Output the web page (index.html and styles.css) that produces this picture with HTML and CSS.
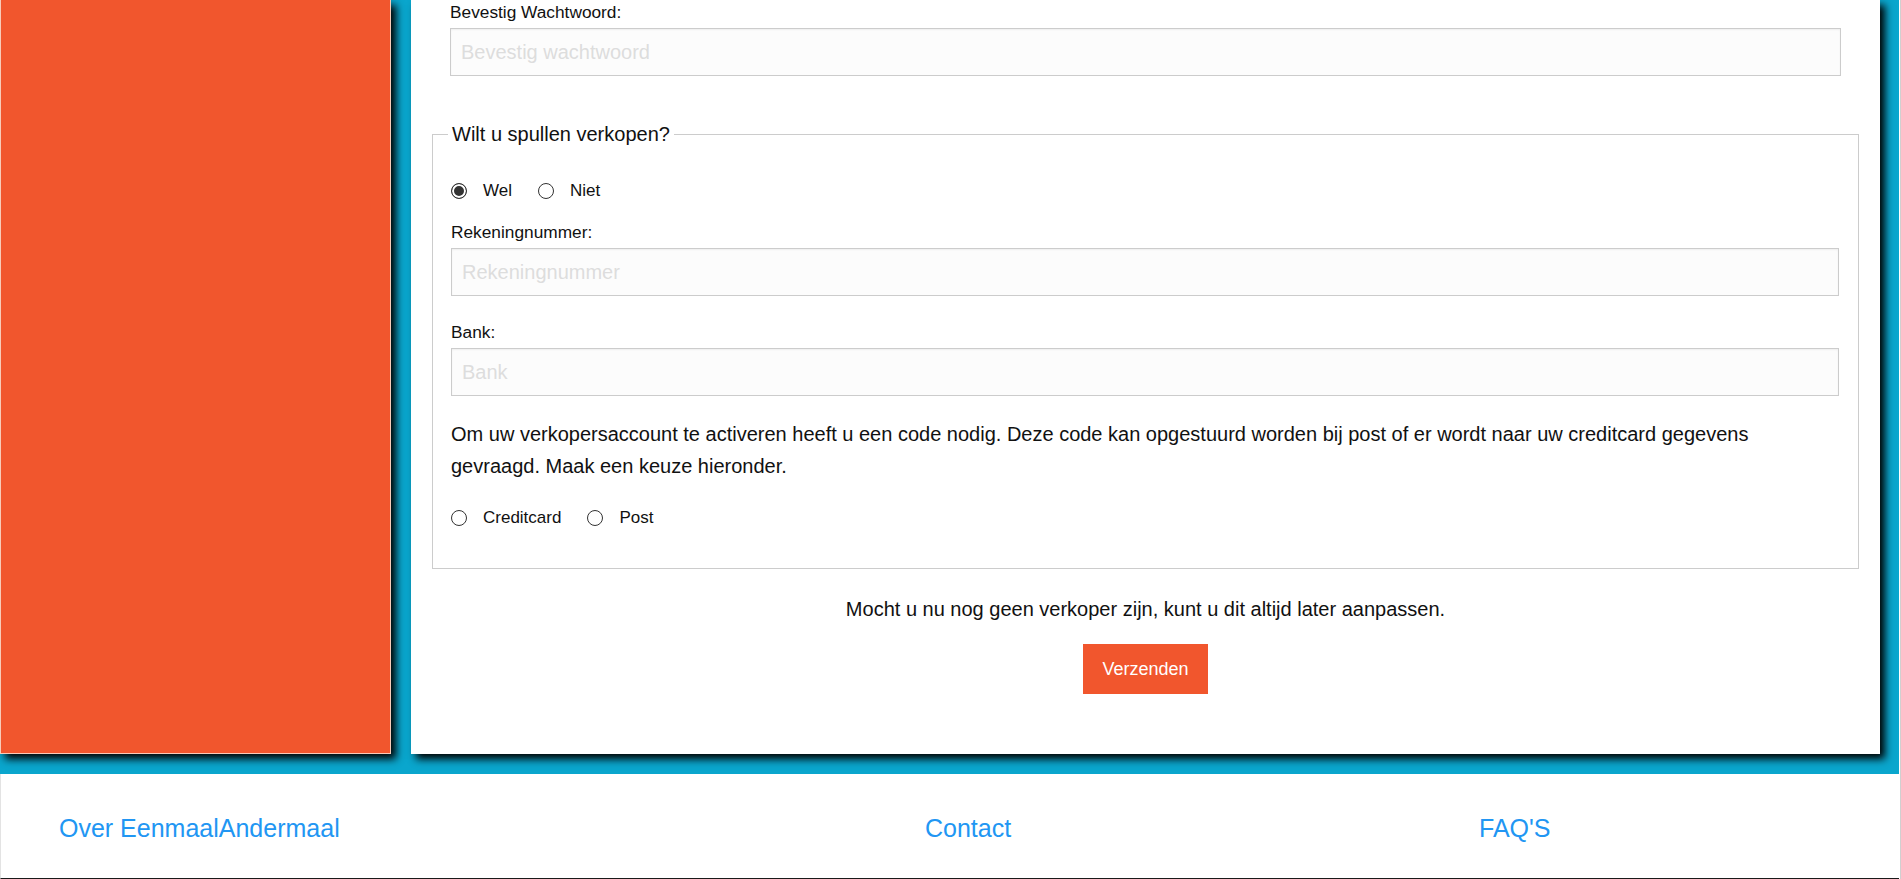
FILE: index.html
```html
<!DOCTYPE html>
<html lang="nl">
<head>
<meta charset="utf-8">
<title>Registreren - EenmaalAndermaal</title>
<link rel="stylesheet" href="styles.css">
</head>
<body>
<div class="site">
  <div class="stage">
    <aside class="sidebar"></aside>
    <main class="panel">
      <form class="form">
        <div class="field field-top">
          <label class="label" for="pw2">Bevestig Wachtwoord:</label>
          <input id="pw2" class="input" type="password" placeholder="Bevestig wachtwoord">
        </div>

        <fieldset class="seller">
          <legend class="legend">Wilt u spullen verkopen?</legend>
          <div class="radios">
            <label class="radio"><input type="radio" name="seller" checked><span>Wel</span></label>
            <label class="radio"><input type="radio" name="seller"><span>Niet</span></label>
          </div>
          <div class="field">
            <label class="label" for="iban">Rekeningnummer:</label>
            <input id="iban" class="input" type="text" placeholder="Rekeningnummer">
          </div>
          <div class="field">
            <label class="label" for="bank">Bank:</label>
            <input id="bank" class="input" type="text" placeholder="Bank">
          </div>
          <p class="note">Om uw verkopersaccount te activeren heeft u een code nodig. Deze code kan opgestuurd worden bij post of er wordt naar uw creditcard gegevens gevraagd. Maak een keuze hieronder.</p>
          <div class="radios radios-code">
            <label class="radio"><input type="radio" name="code"><span>Creditcard</span></label>
            <label class="radio"><input type="radio" name="code"><span>Post</span></label>
          </div>
        </fieldset>

        <p class="later">Mocht u nu nog geen verkoper zijn, kunt u dit altijd later aanpassen.</p>
        <div class="actions">
          <button class="btn" type="submit">Verzenden</button>
        </div>
      </form>
    </main>
  </div>

  <footer class="footer">
    <a class="footer-link" href="#">Over EenmaalAndermaal</a>
    <a class="footer-link" href="#">Contact</a>
    <a class="footer-link" href="#">FAQ'S</a>
  </footer>
</div>
</body>
</html>
```

FILE: styles.css
```css
html, body {
  margin: 0;
  padding: 0;
  background: #ffffff;
}

body {
  font-family: "Liberation Sans", Arial, sans-serif;
  color: #111111;
}

.site {
  border-right: 1px solid #d0d0d0;
  padding-right: 1px;
}

.stage {
  display: flex;
  gap: 20px;
  background: #0aa6cd;
  padding: 0 19px 20px 0;
}

.sidebar {
  width: 391px;
  flex: 0 0 391px;
  box-sizing: border-box;
  background: #f1562d;
  border: 1px solid #f8cbb9;
  border-top: none;
  box-shadow: 5px 5px 8px #000000;
}

.panel {
  flex: 1 1 auto;
  background: #ffffff;
  padding: 2px 21px 60px;
  box-shadow: 5px 5px 8px #000000;
}

.form {
  margin: 0;
}

.field-top {
  margin: 0 18px;
}

.label {
  display: block;
  font-size: 17.3px;
  line-height: 20px;
  margin-bottom: 6px;
  color: #111111;
}

.input {
  display: block;
  box-sizing: border-box;
  width: 100%;
  height: 48px;
  margin: 0;
  padding: 0 10px;
  border: 1px solid #cccccc;
  background: #fcfcfc;
  box-shadow: inset 0 1px 2px rgba(0, 0, 0, 0.06);
  font-family: "Liberation Sans", Arial, sans-serif;
  font-size: 20px;
  color: #222222;
  outline: none;
}

.input::placeholder {
  color: #dddddd;
}

.seller {
  margin: 46px 0 0;
  padding: 35px 19px 40px 18px;
  border: 1px solid #cccccc;
  min-width: 0;
}

.legend {
  font-size: 20px;
  line-height: 24px;
  padding: 0 4px;
  margin-left: -3px;
  color: #111111;
}

.radios {
  display: flex;
  align-items: center;
  height: 20px;
  font-size: 17px;
  line-height: 20px;
}

.radios-code {
  margin-top: 26px;
}

.radio {
  display: inline-flex;
  align-items: center;
  margin-right: 26px;
  cursor: pointer;
}

.radio input {
  appearance: none;
  -webkit-appearance: none;
  width: 16px;
  height: 16px;
  margin: 0 16px 0 0;
  box-sizing: border-box;
  border: 1px solid #333333;
  border-radius: 50%;
  background: #ffffff;
}

.radio input:checked {
  background: #333333;
  box-shadow: inset 0 0 0 2px #ffffff;
}

.seller .field {
  margin-top: 21px;
}

.seller .field + .field {
  margin-top: 26px;
}

.note {
  margin: 22px 0 0;
  font-size: 20px;
  line-height: 32px;
  color: #111111;
}

.later {
  margin: 28px 0 0;
  text-align: center;
  font-size: 20px;
  line-height: 24px;
  color: #111111;
}

.actions {
  display: flex;
  justify-content: center;
  margin-top: 23px;
}

.btn {
  width: 125px;
  height: 50px;
  border: none;
  background: #f1562d;
  color: #ffffff;
  font-family: "Liberation Sans", Arial, sans-serif;
  font-size: 18px;
  cursor: pointer;
}

.footer {
  display: grid;
  grid-template-columns: 866px 554px 1fr;
  align-items: center;
  box-sizing: border-box;
  height: 105px;
  padding: 4px 0 0 58px;
  border-left: 1px solid #e3e3e3;
  border-bottom: 1px solid #1a1a1a;
}

.footer-link {
  font-size: 25px;
  color: #2196f3;
  text-decoration: none;
}
```
